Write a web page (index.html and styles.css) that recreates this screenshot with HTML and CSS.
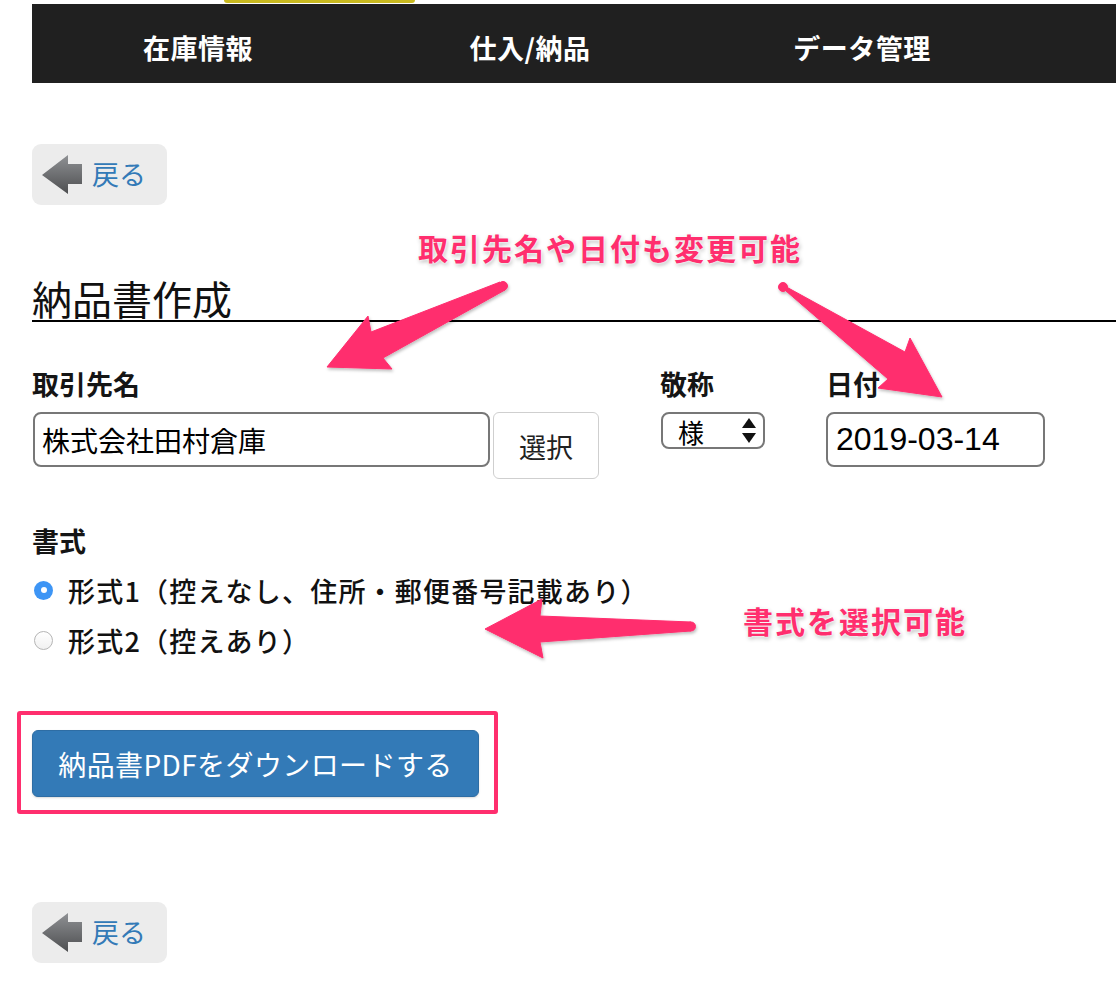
FILE: index.html
```html
<!DOCTYPE html>
<html lang="ja">
<head>
<meta charset="utf-8">
<title>納品書作成</title>
<link rel="stylesheet" href="styles.css">
</head>
<body>
<div class="page">
  <div class="topstrip"><span class="tab"></span></div>
  <nav class="nav">
    <a class="nav-item">在庫情報</a>
    <a class="nav-item">仕入/納品</a>
    <a class="nav-item">データ管理</a>
  </nav>

  <a class="back back-top">
    <svg class="back-icon" width="40" height="39" viewBox="0 0 40 39">
      <defs>
        <linearGradient id="bg1" x1="0" y1="0" x2="0" y2="1">
          <stop offset="0" stop-color="#8f9194"/>
          <stop offset="1" stop-color="#4d4e50"/>
        </linearGradient>
      </defs>
      <polygon points="0,20 26,0 26,9 40,9 40,29 26,29 26,39" fill="url(#bg1)"/>
    </svg>
    <span class="back-text">戻る</span>
  </a>

  <h1 class="title">納品書作成</h1>

  <div class="fields">
    <div class="field field-client">
      <label class="label">取引先名</label>
      <div class="client-row">
        <input class="text-input client-input" type="text" value="株式会社田村倉庫">
        <button class="select-btn">選択</button>
      </div>
    </div>
    <div class="field field-honor">
      <label class="label">敬称</label>
      <div class="fake-select">
        <span class="fake-select-text">様</span>
        <svg class="updown" width="14" height="26" viewBox="0 0 14 26">
          <polygon points="7,0 14,10 0,10" fill="#111"/>
          <polygon points="0,15 14,15 7,25" fill="#111"/>
        </svg>
      </div>
    </div>
    <div class="field field-date">
      <label class="label">日付</label>
      <input class="text-input date-input" type="text" value="2019-03-14">
    </div>
  </div>

  <div class="format">
    <div class="label">書式</div>
    <div class="radio-row"><span class="radio checked"></span><span class="radio-text">形式1（控えなし、住所・郵便番号記載あり）</span></div>
    <div class="radio-row"><span class="radio"></span><span class="radio-text">形式2（控えあり）</span></div>
  </div>

  <div class="highlight">
    <button class="primary-btn">納品書PDFをダウンロードする</button>
  </div>

  <a class="back back-bottom">
    <svg class="back-icon" width="40" height="39" viewBox="0 0 40 39">
      <defs>
        <linearGradient id="bg2" x1="0" y1="0" x2="0" y2="1">
          <stop offset="0" stop-color="#8f9194"/>
          <stop offset="1" stop-color="#4d4e50"/>
        </linearGradient>
      </defs>
      <polygon points="0,20 26,0 26,9 40,9 40,29 26,29 26,39" fill="url(#bg2)"/>
    </svg>
    <span class="back-text">戻る</span>
  </a>

  <div class="note note-1">取引先名や日付も変更可能</div>
  <div class="note note-2">書式を選択可能</div>

  <svg class="arrows" width="1116" height="1006" viewBox="0 0 1116 1006">
    <defs>
      <filter id="sh" x="-10%" y="-10%" width="130%" height="130%">
        <feDropShadow dx="1" dy="2" stdDeviation="1.5" flood-color="#000" flood-opacity="0.25"/>
      </filter>
    </defs>
    <g fill="#ff2e6e" filter="url(#sh)" stroke="#ff2e6e" stroke-width="1" stroke-linejoin="round">
      <polygon points="500,282 371,332 368,316 327,367 392,369 383,358 505,290"/>
      <circle cx="503" cy="286" r="4.5"/>
      <polygon points="781,284 905,352 910,338 942,397 878,388 888,379 786,291"/>
      <circle cx="783" cy="287" r="4.5"/>
      <polygon points="691,622 540,616 542,599 485,629 543,658 540,642 691,631"/>
      <circle cx="691" cy="626.5" r="4.5"/>
    </g>
  </svg>
</div>
</body>
</html>
```

FILE: styles.css
```css
html, body {
  margin: 0;
  padding: 0;
  background: #fff;
  overflow: hidden;
}

body {
  font-family: "Noto Sans CJK JP", "Noto Sans", sans-serif;
  color: #111;
}

.page {
  position: relative;
  padding-left: 32px;
  height: 1006px;
}

.topstrip {
  height: 4px;
}

.tab {
  display: block;
  margin-left: 192px;
  width: 191px;
  height: 3px;
  background: #c8b91f;
  border-radius: 0 0 3px 3px;
}

.nav {
  display: grid;
  grid-template-columns: 332px 332px 332px;
  height: 79px;
  background: #202020;
}

.nav-item {
  display: flex;
  align-items: center;
  justify-content: center;
  padding-top: 7px;
  color: #fff;
  font-size: 27px;
  font-weight: 700;
  letter-spacing: 0.5px;
}

.back {
  display: flex;
  align-items: center;
  width: 135px;
  height: 61px;
  box-sizing: border-box;
  padding-left: 10px;
  background: #ececec;
  border-radius: 9px;
}

.back-top {
  margin-top: 61px;
}

.back-bottom {
  margin-top: 88px;
}

.back-icon {
  display: block;
  flex: none;
}

.back-text {
  margin-left: 10px;
  font-size: 27px;
  color: #337ab7;
  line-height: 1;
  padding-bottom: 2px;
}

.title {
  margin: 71px 0 0 0;
  font-size: 40px;
  font-weight: 400;
  line-height: 44px;
  border-bottom: 2px solid #000;
  color: #111;
}

.fields {
  display: flex;
  margin-top: 45px;
}

.field-client {
  width: 628px;
}

.field-honor {
  width: 166px;
}

.label {
  display: block;
  font-size: 27px;
  font-weight: 700;
  line-height: 34px;
  height: 34px;
  margin-bottom: 11px;
  color: #151515;
}

.client-row {
  display: flex;
  align-items: flex-start;
}

.text-input {
  box-sizing: border-box;
  height: 55px;
  border: 2px solid #777;
  border-radius: 8px;
  background: #fff;
  color: #000;
  padding: 0 0 0 7px;
  margin: 0;
  outline: none;
}

.client-input {
  width: 457px;
  margin-left: 1px;
  font-family: "Noto Sans CJK JP", sans-serif;
  font-size: 28px;
}

.select-btn {
  box-sizing: border-box;
  width: 106px;
  height: 67px;
  margin-left: 3px;
  border: 1px solid #cfcfcf;
  border-radius: 6px;
  background: #fff;
  font-family: "Noto Sans CJK JP", sans-serif;
  font-size: 27px;
  color: #222;
  padding: 2px 0 0 0;
}

.fake-select {
  box-sizing: border-box;
  display: flex;
  align-items: center;
  width: 104px;
  height: 37px;
  margin-left: 1px;
  border: 2px solid #777;
  border-radius: 8px;
  background: #fff;
}

.fake-select-text {
  margin-left: 15px;
  font-size: 26px;
  line-height: 30px;
  padding-top: 3px;
  color: #000;
}

.updown {
  margin-left: auto;
  margin-right: 7px;
}

.date-input {
  width: 219px;
  font-family: "Liberation Sans", Arial, sans-serif;
  font-size: 32px;
  padding-left: 8px;
}

.format {
  margin-top: 45px;
}

.format .label {
  margin-bottom: 7px;
}

.radio-row {
  display: flex;
  align-items: center;
  height: 50px;
}

.radio {
  box-sizing: border-box;
  width: 19px;
  height: 19px;
  margin-left: 2px;
  margin-right: 15px;
  border-radius: 50%;
  border: 1px solid #b5b5b5;
  background: linear-gradient(#fff, #f1f1f1);
  position: relative;
  flex: none;
}

.radio.checked {
  border: none;
  background: #3d95f5;
}

.radio.checked::after {
  content: "";
  position: absolute;
  left: 6.5px;
  top: 6.5px;
  width: 6px;
  height: 6px;
  border-radius: 50%;
  background: #fff;
}

.radio-text {
  font-size: 27px;
  font-weight: 500;
  letter-spacing: 1.2px;
  color: #111;
  line-height: 1;
}

.highlight {
  display: inline-block;
  margin-top: 46px;
  margin-left: -15px;
  border: 4px solid #ff2e6e;
  border-radius: 3px;
  padding: 15px 15px 13px 11px;
}

.primary-btn {
  display: block;
  box-sizing: border-box;
  width: 447px;
  height: 67px;
  border: 1px solid #2e6da4;
  border-radius: 6px;
  background: #337ab7;
  color: #fff;
  font-family: "Noto Sans CJK JP", sans-serif;
  font-size: 28px;
  letter-spacing: 0.4px;
  padding: 0;
  box-shadow: 0 1px 2px rgba(0,0,0,0.15);
}

.note {
  position: absolute;
  color: #ff2e6e;
  font-weight: 700;
  font-size: 30px;
  letter-spacing: 2px;
  line-height: 1;
  text-shadow: 0 0 2px #fff, 0 0 3px #fff, 1px 2px 4px rgba(0,0,0,0.3);
  white-space: nowrap;
}

.note-1 {
  left: 418px;
  top: 232px;
}

.note-2 {
  left: 743px;
  top: 605px;
}

.arrows {
  position: absolute;
  left: 0;
  top: 0;
  pointer-events: none;
}
```
